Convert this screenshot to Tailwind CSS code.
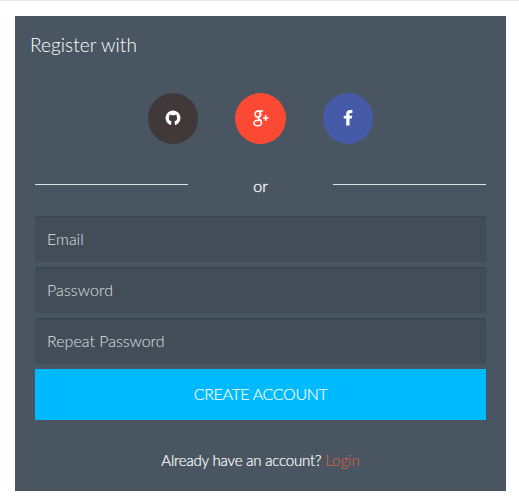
<!DOCTYPE html>
<html lang="en">
<head>
<meta charset="utf-8">
<title>Register</title>
<script src="https://cdn.jsdelivr.net/npm/@tailwindcss/browser@4"></script>
</head>
<body class="h-[503px] overflow-hidden border-t border-[#e7e7e7] bg-white pt-[15px] pl-[15px] font-['Lato',sans-serif] font-light text-white">
<main class="flex h-[475px] w-[491px] flex-col bg-[#495662] px-5">
  <h1 class="-ml-[5px] pt-[17px] text-[19px] leading-6 tracking-[0.07px] whitespace-nowrap">Register with</h1>
  <div class="mt-[36px] flex justify-center gap-[37px]">
    <a href="#" aria-label="GitHub" class="flex size-[50.6px] items-center justify-center rounded-full bg-[#413939] pl-px">
      <svg class="size-[16px]" viewBox="0 0 15 15" fill="currentColor"><path d="M7.500.5a7 7 0 0 0-2.300 13.600c.4.1.6-.1.6-.4v-1.900c0-.5.2-.9.500-1.200-1.700-.2-2.700-1-2.700-3 0-.6.2-1.100.6-1.500-.2-.5-.2-1.200.1-1.800.6 0 1.200.3 1.700.7.900-.2 2-.2 3 0 .5-.4 1.100-.7 1.700-.7.3.6.3 1.300.1 1.800.4.4.6.9.6 1.500 0 2-1 2.800-2.700 3 .3.3.5.7.5 1.200v1.900c0 .3.200.5.600.4A7 7 0 0 0 7.500.5Z"/></svg>
    </a>
    <a href="#" aria-label="Google Plus" class="flex size-[50.6px] items-center justify-center rounded-full bg-[#fb4933]">
      <svg class="h-[17px] w-[16px]" viewBox="0 0 16 17" fill="none" stroke="currentColor"><path d="M10.200 1H5.600C3.500 1 2.100 2.300 2.100 4.200c0 1.700 1.100 2.900 2.700 2.900S7.500 5.900 7.500 4.200C7.500 2.400 6.500 1.100 5 1.100M5.500 7.100c-1.100 1.100.1 1.700 1.200 2.500 1.200.8 1.800 1.500 1.800 2.800 0 2-1.500 3.300-3.900 3.300-2.300 0-3.700-1-3.700-2.600 0-2 2.400-2.900 5.200-2.900" stroke-width="1.500"/><path d="M6.300 1.500c1.500 1 1.800 3.600.3 5M6.400 9.300c1.500 1 2 1.600 1.800 3.300" stroke-width="1.800"/><path d="M12.700 5.300v5.400M10 8h5.400" stroke-width="1.700"/></svg>
    </a>
    <a href="#" aria-label="Facebook" class="flex size-[50.6px] items-center justify-center rounded-full bg-[#465ba8]">
      <svg class="h-[16px] w-[10px]" viewBox="0 0 10 16" fill="currentColor"><path d="M9.400.2v2.900H7.800c-1.100 0-1.300.4-1.300 1.200v1.500h2.700l-.4 2.800H6.500V15.600H3.200V8.600H.7V5.800h2.500V3.900C3.200 1.400 4.700.1 7.100.1c1 0 2 .1 2.300.1Z"/></svg>
    </a>
  </div>
  <div class="mt-[30px] flex h-[42px] justify-between">
    <span class="mt-[10px] h-px w-[153px] bg-[#dce4e6]"></span>
    <span class="text-[16px] leading-6 [-webkit-text-stroke:0.3px_white]">or</span>
    <span class="mt-[10px] h-px w-[153px] bg-[#dce4e6]"></span>
  </div>
  <form class="flex flex-col gap-[5px]">
    <input type="text" placeholder="Email" class="h-[46px] w-full rounded-[3px] bg-[#424d58] px-3 text-[16px] shadow-[inset_0_1px_1px_#37434d] placeholder:text-[#dfe2e4]">
    <input type="password" placeholder="Password" class="h-[46px] w-full rounded-[3px] bg-[#424d58] px-3 text-[16px] tracking-[0.1px] shadow-[inset_0_1px_1px_#37434d] placeholder:text-[#dfe2e4]">
    <input type="password" placeholder="Repeat Password" class="h-[46px] w-full rounded-[3px] bg-[#424d58] px-3 text-[16px] shadow-[inset_0_1px_1px_#37434d] placeholder:text-[#dfe2e4]">
    <button type="button" class="h-[51px] bg-[#00baff] text-[16px] font-light tracking-[-0.36px] [-webkit-text-stroke:0.15px_white]">CREATE ACCOUNT</button>
  </form>
  <p class="mt-[28px] text-center text-[15px] leading-6 tracking-[-0.18px] whitespace-nowrap"><span class="[-webkit-text-stroke:0.2px_white]">Already have an account?</span> <a href="#" class="tracking-normal text-[#e4603d]">Login</a></p>
</main>
</body>
</html>
